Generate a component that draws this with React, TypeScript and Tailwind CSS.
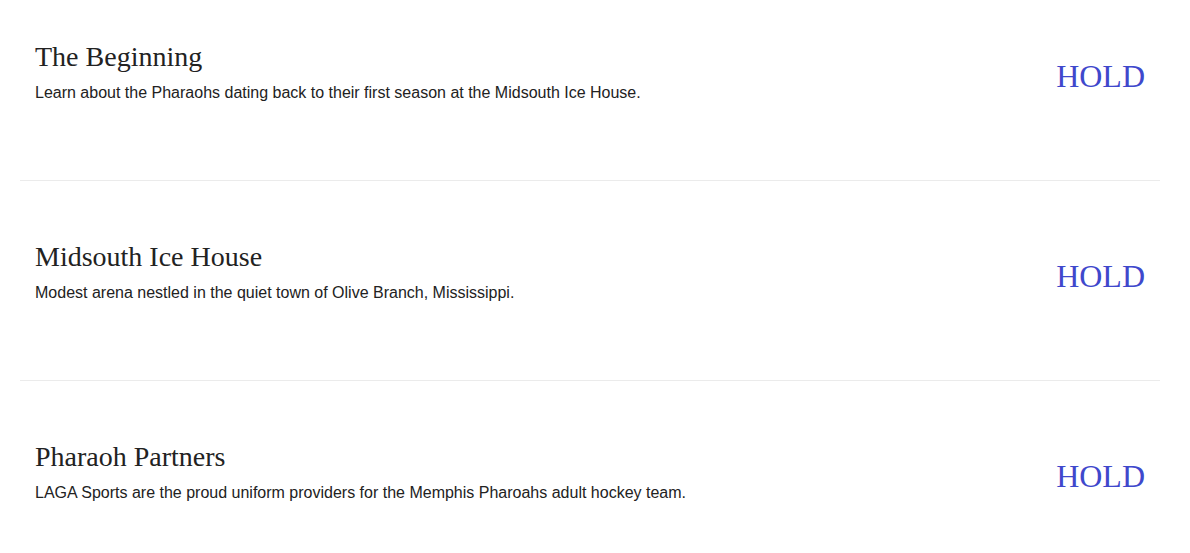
import React from "react";

const items = [
  {
    title: "The Beginning",
    desc: "Learn about the Pharaohs dating back to their first season at the Midsouth Ice House.",
  },
  {
    title: "Midsouth Ice House",
    desc: "Modest arena nestled in the quiet town of Olive Branch, Mississippi.",
  },
  {
    title: "Pharaoh Partners",
    desc: "LAGA Sports are the proud uniform providers for the Memphis Pharoahs adult hockey team.",
  },
];

export default function App() {
  return (
    <div className="min-h-[553px] bg-white pl-[20px] pr-[30px]">
      {items.map((it, i) => (
        <div key={i} className={i < items.length - 1 ? "border-b border-[#ebebeb]" : ""}>
          <div className={`flex h-[180px] items-center justify-between pl-[15px] pr-[15px] ${i === 0 ? "" : "mt-[19px]"}`}>
            <div className="-mt-[37px]">
              <h2 className="text-[28px] leading-[34px] text-[#222] font-['Liberation_Serif',serif]">{it.title}</h2>
              <p className="mt-[9px] text-[16px] leading-[20px] text-[#222] font-['Liberation_Sans',Arial,sans-serif]">{it.desc}</p>
            </div>
            <div className="-mt-[28px] text-[32px] leading-[40px] text-[#3f48cc] font-['Liberation_Serif',serif]">HOLD</div>
          </div>
        </div>
      ))}
    </div>
  );
}
